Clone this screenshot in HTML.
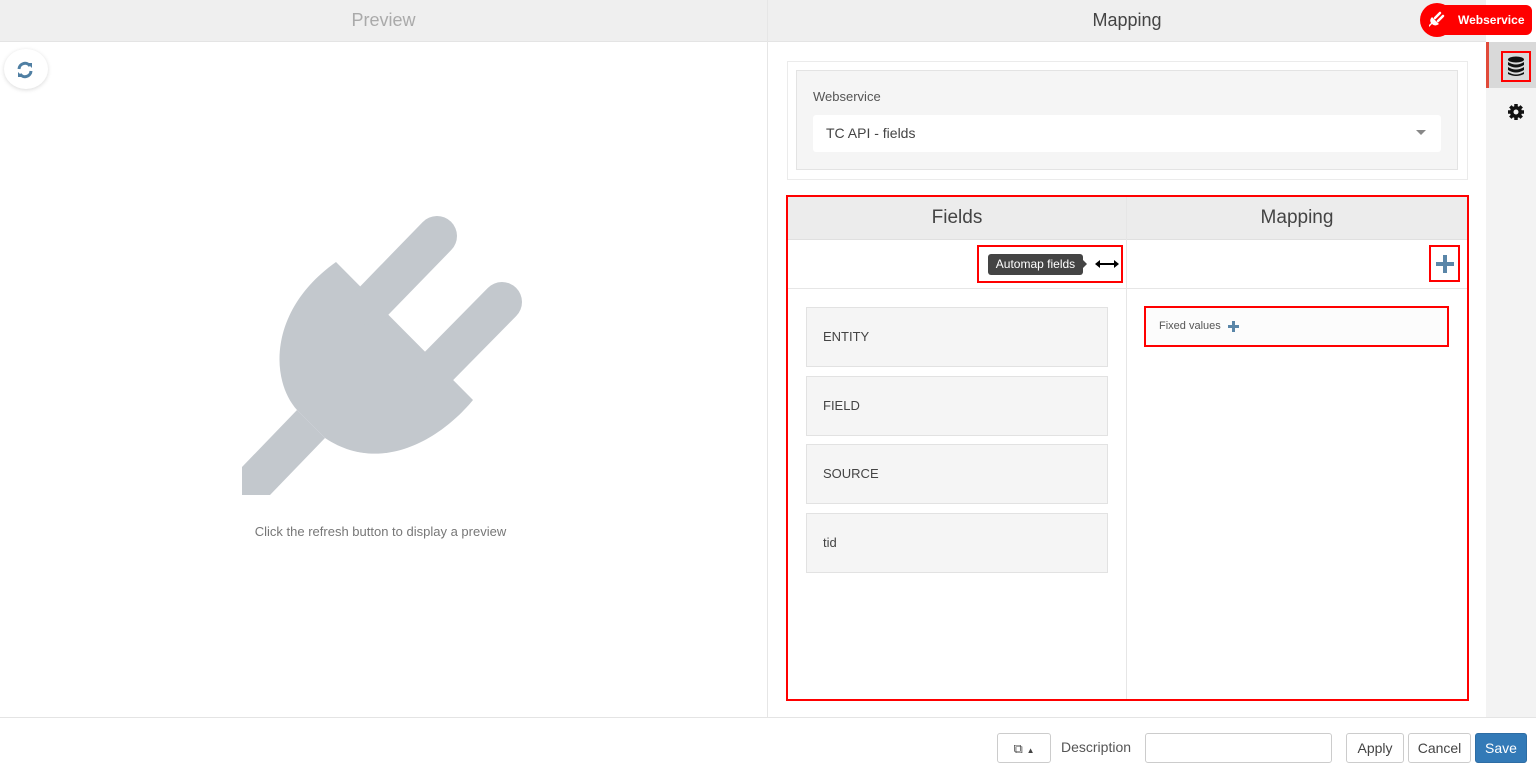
<!DOCTYPE html>
<html><head><meta charset="utf-8"><style>
*{box-sizing:border-box;margin:0;padding:0}
body{width:1536px;height:770px;position:relative;overflow:hidden;background:#fff;font-family:"Liberation Sans",sans-serif;color:#555}
.a{position:absolute}
.card{position:absolute;left:806px;width:302px;height:60px;background:#f5f5f5;border:1px solid #e2e2e2;font-size:13px;color:#444;padding-left:16px;line-height:58px}
.btn{position:absolute;top:733px;height:30px;border:1px solid #ccc;border-radius:3px;background:#fff;font-size:14px;color:#444;text-align:center;line-height:28px}
</style></head><body>
<div class="a" style="left:0;top:0;width:1486px;height:42px;background:#efefef;border-bottom:1px solid #e4e4e4"></div>
<div class="a" style="left:767px;top:0;width:1px;height:717px;background:#e6e6e6"></div>
<div class="a" style="left:0;top:10px;width:767px;text-align:center;font-size:18px;color:#aaa">Preview</div>
<div class="a" style="left:768px;top:10px;width:718px;text-align:center;font-size:18px;color:#444">Mapping</div>
<div class="a" style="left:1436px;top:5px;width:96px;height:30px;background:#f00;border-radius:6px"></div>
<div class="a" style="left:1420px;top:3px;width:34px;height:34px;background:#f00;border-radius:50%"></div>
<svg class="a" style="left:1427px;top:9px" width="20" height="20" viewBox="0 0 20 20"><g fill="#fff"><path d="M5 8 L12 15 Q8 18 5 15 L2 18 L2 16 L4 14 Q2 11 5 8Z"/><path d="M8 9 L13 4" stroke="#fff" stroke-width="2.5" stroke-linecap="round"/><path d="M11 12 L16 7" stroke="#fff" stroke-width="2.5" stroke-linecap="round"/></g></svg>
<div class="a" style="left:1458px;top:13px;font-size:12px;color:#fff;font-weight:bold">Webservice</div>
<div class="a" style="left:1486px;top:42px;width:50px;height:675px;background:#f3f3f3"></div>
<div class="a" style="left:1486px;top:42px;width:50px;height:46px;background:#d9d9d9"></div>
<div class="a" style="left:1486px;top:42px;width:3px;height:46px;background:#e04a3a"></div>
<div class="a" style="left:1501px;top:51px;width:30px;height:31px;border:2px solid #f00"></div>
<svg class="a" style="left:1507px;top:56px" width="18" height="21" viewBox="0 0 18 21"><g fill="#111"><ellipse cx="9" cy="3.5" rx="8" ry="3"/><path d="M1 6 Q9 11 17 6 V9 Q9 14 1 9Z"/><path d="M1 11 Q9 16 17 11 V14 Q9 19 1 14Z"/><path d="M1 16 Q9 21 17 16 V18 Q9 22 1 18Z"/></g></svg>
<svg class="a" style="left:1507px;top:103px" width="18" height="18" viewBox="0 0 18 18"><g fill="#111"><circle cx="9" cy="9" r="6"/><g stroke="#111" stroke-width="3.5"><line x1="9" y1="1" x2="9" y2="17"/><line x1="1" y1="9" x2="17" y2="9"/><line x1="3.3" y1="3.3" x2="14.7" y2="14.7"/><line x1="14.7" y1="3.3" x2="3.3" y2="14.7"/></g></g><circle cx="9" cy="9" r="2.5" fill="#f3f3f3"/></svg>
<div class="a" style="left:4px;top:49px;width:44px;height:40px;border-radius:50%;background:#fff;box-shadow:0 1px 4px rgba(0,0,0,.15)"></div>
<svg class="a" style="left:16px;top:61px" width="18" height="18" viewBox="0 0 18 18"><g fill="none" stroke="#4f7fa3" stroke-width="3"><path d="M3 8 A6 6 0 0 1 14 5"/><path d="M15 10 A6 6 0 0 1 4 13"/></g><path d="M11 2 L16 2 L16 7Z" fill="#4f7fa3"/><path d="M7 16 L2 16 L2 11Z" fill="#4f7fa3"/></svg>
<svg class="a" style="left:0;top:0" width="767" height="717"><g fill="#c3c8cd"><path d="M336,262 L473,400 C440,440 380,475 325,438 L297,410 C270,380 268,310 336,262Z"/><path d="M297,410 L242,467 L242,495 L270,495 L325,438Z"/></g><g stroke="#c3c8cd" stroke-width="40" stroke-linecap="round"><line x1="370" y1="305" x2="437" y2="236"/><line x1="435" y1="370" x2="502" y2="302"/></g></svg>
<div class="a" style="left:0;top:524px;width:761px;text-align:center;font-size:13px;color:#777">Click the refresh button to display a preview</div>
<div class="a" style="left:787px;top:61px;width:681px;height:119px;border:1px solid #ebebeb"></div>
<div class="a" style="left:796px;top:70px;width:662px;height:100px;background:#f5f5f5;border:1px solid #e3e3e3"></div>
<div class="a" style="left:813px;top:89px;font-size:13px;color:#555">Webservice</div>
<div class="a" style="left:813px;top:115px;width:628px;height:37px;background:#fff;border-radius:3px;font-size:14px;color:#444;padding-left:13px;line-height:36px">TC API - fields</div>
<div class="a" style="left:1416px;top:130px;border-left:5px solid transparent;border-right:5px solid transparent;border-top:5px solid #888"></div>
<div class="a" style="left:788px;top:197px;width:679px;height:43px;background:#ececec;border-bottom:1px solid #e0e0e0"></div>
<div class="a" style="left:1126px;top:197px;width:1px;height:502px;background:#e6e6e6"></div>
<div class="a" style="left:788px;top:288px;width:679px;height:1px;background:#e6e6e6"></div>
<div class="a" style="left:788px;top:207px;width:338px;text-align:center;font-size:19px;color:#444">Fields</div>
<div class="a" style="left:1127px;top:207px;width:340px;text-align:center;font-size:19px;color:#444">Mapping</div>
<div class="a" style="left:786px;top:195px;width:683px;height:506px;border:2px solid #f00"></div>
<div class="a" style="left:977px;top:245px;width:146px;height:38px;border:2px solid #f00"></div>
<div class="a" style="left:988px;top:254px;width:95px;height:21px;background:#444;border-radius:3px;color:#fff;font-size:12px;line-height:21px;text-align:center">Automap fields</div>
<div class="a" style="left:1082px;top:259px;border-top:5px solid transparent;border-bottom:5px solid transparent;border-left:5px solid #444"></div>
<svg class="a" style="left:1095px;top:258px" width="24" height="12" viewBox="0 0 24 12"><line x1="3" y1="6" x2="21" y2="6" stroke="#000" stroke-width="2"/><path d="M0 6 L5 2 L5 10Z M24 6 L19 2 L19 10Z" fill="#000"/></svg>
<div class="a" style="left:1429px;top:245px;width:31px;height:37px;border:2px solid #f00"></div>
<div class="a" style="left:1436px;top:262px;width:18px;height:4px;background:#5a86a8"></div>
<div class="a" style="left:1443px;top:255px;width:4px;height:18px;background:#5a86a8"></div>
<div class="card" style="top:307px">ENTITY</div>
<div class="card" style="top:376px">FIELD</div>
<div class="card" style="top:444px">SOURCE</div>
<div class="card" style="top:513px">tid</div>
<div class="a" style="left:1144px;top:306px;width:305px;height:41px;border:2px solid #f00;background:#fcfcfc"></div>
<div class="a" style="left:1159px;top:320px;font-size:11px;color:#555">Fixed values</div>
<div class="a" style="left:1228px;top:325px;width:11px;height:3px;background:#5a86a8"></div>
<div class="a" style="left:1232px;top:321px;width:3px;height:11px;background:#5a86a8"></div>
<div class="a" style="left:0;top:717px;width:1536px;height:1px;background:#e4e4e4"></div>
<div class="btn" style="left:997px;width:54px"><span style="font-size:13px">⧉</span> <span style="font-size:8px">▲</span></div>
<div class="a" style="left:1061px;top:739px;font-size:14px;color:#555">Description</div>
<div class="a" style="left:1145px;top:733px;width:187px;height:30px;border:1px solid #ccc;border-radius:3px"></div>
<div class="btn" style="left:1346px;width:58px">Apply</div>
<div class="btn" style="left:1408px;width:63px">Cancel</div>
<div class="btn" style="left:1475px;width:52px;background:#337ab7;border-color:#2e6da4;color:#fff">Save</div>
</body></html>
